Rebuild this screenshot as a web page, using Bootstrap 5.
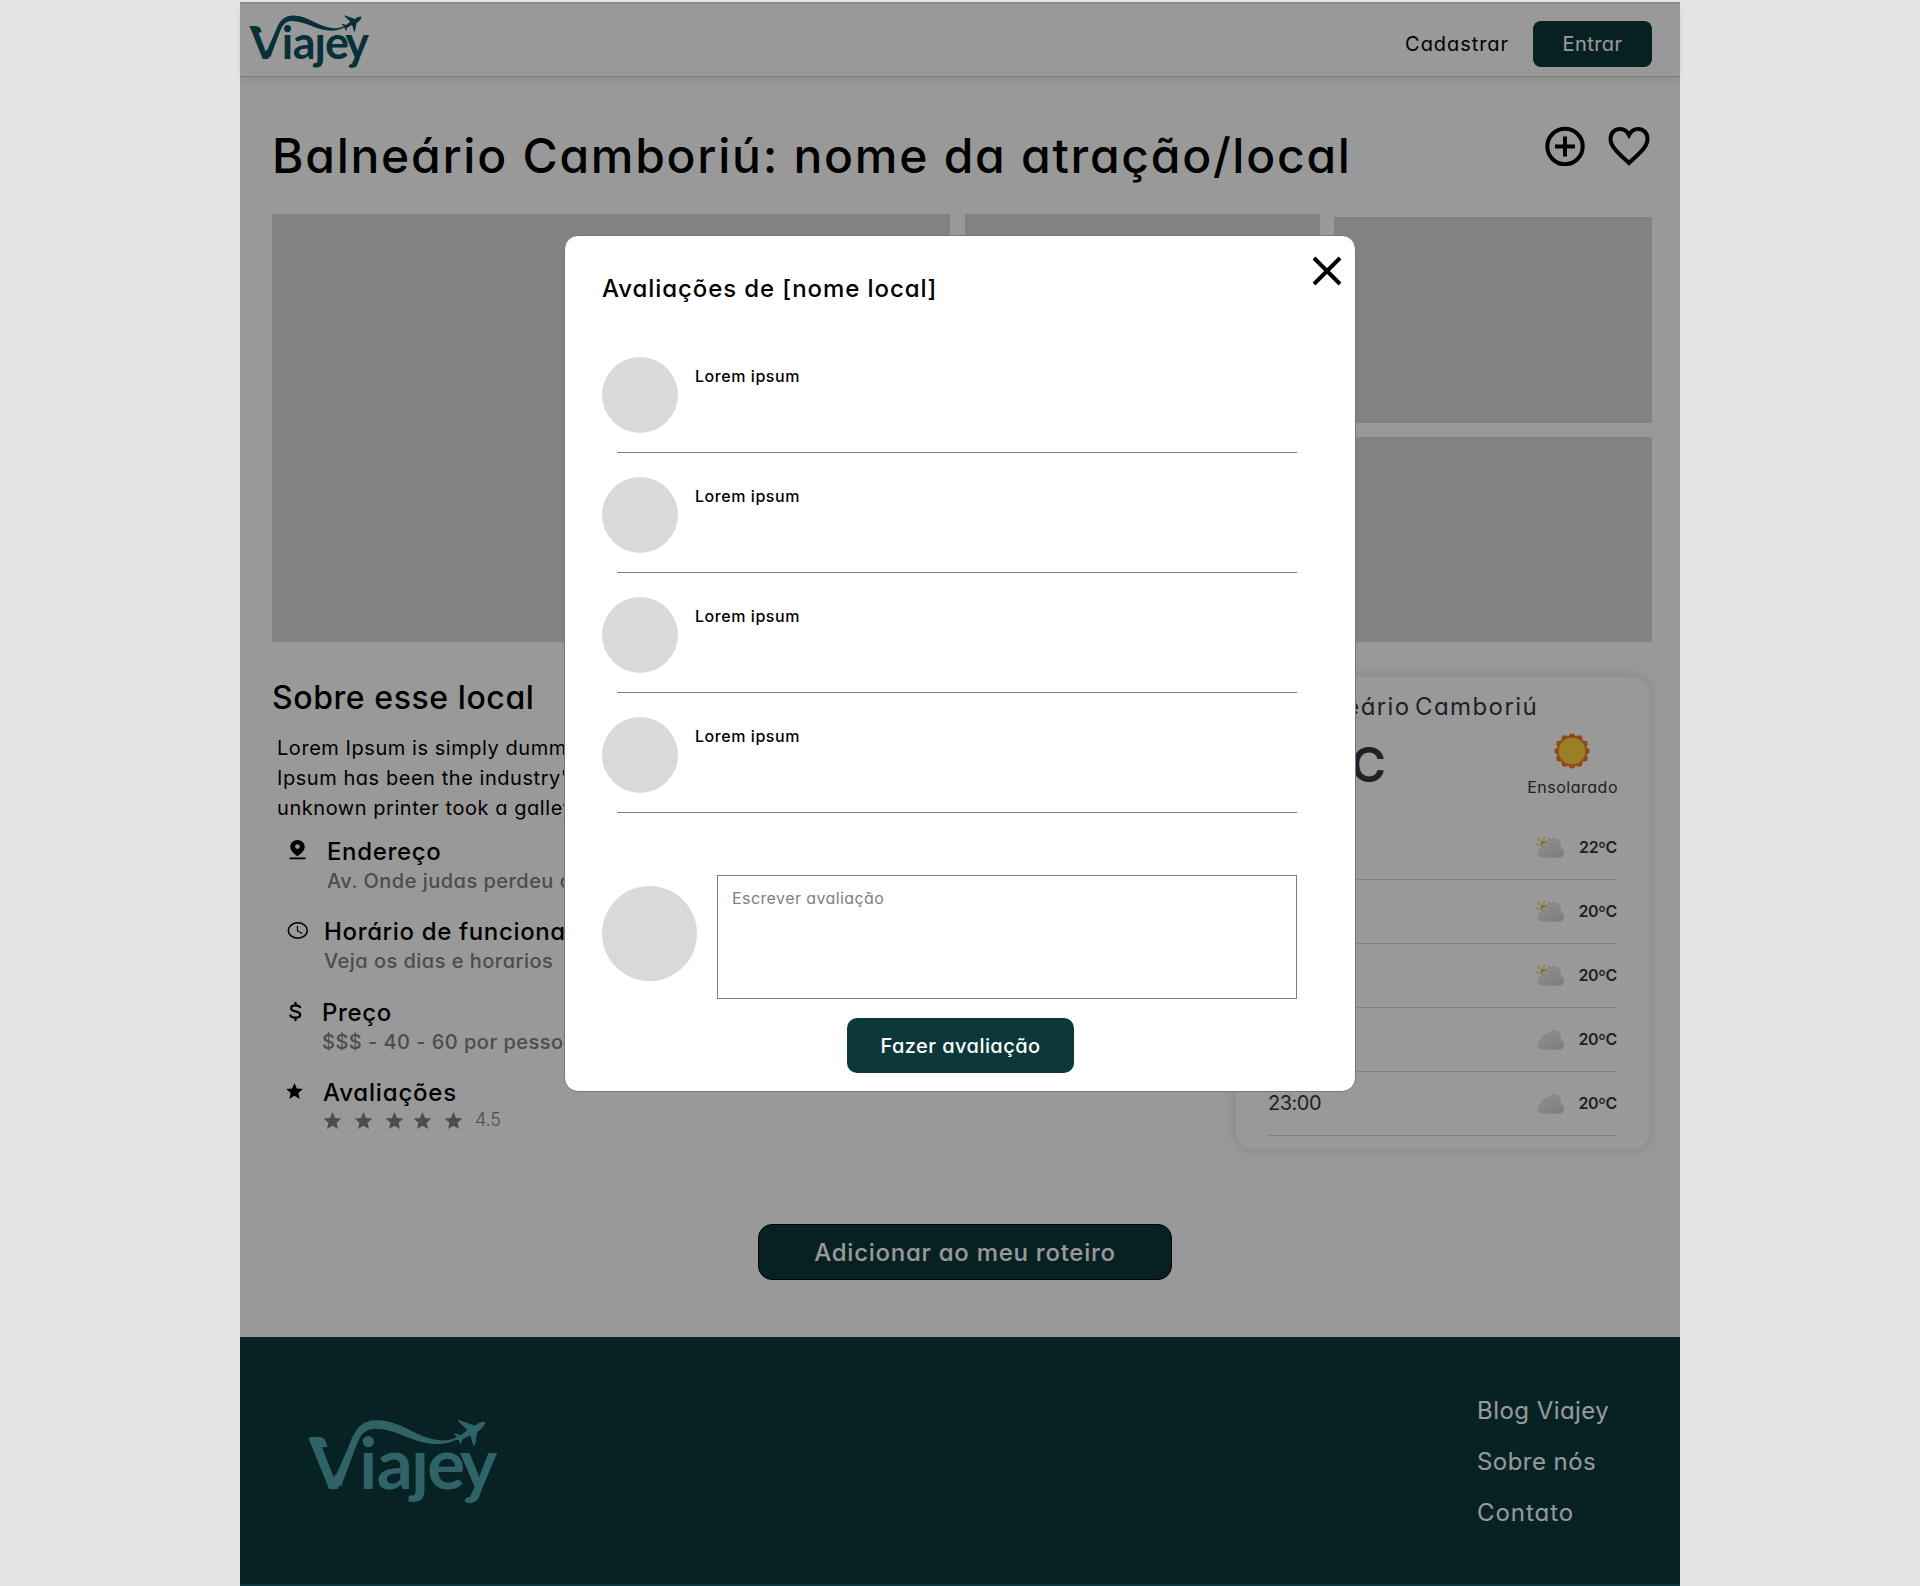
<!DOCTYPE html>
<html lang="pt-BR">
<head>
<meta charset="utf-8">
<meta name="viewport" content="width=device-width, initial-scale=1">
<title>Viajey</title>
<link href="https://cdn.jsdelivr.net/npm/bootstrap@5.3.0/dist/css/bootstrap.min.css" rel="stylesheet">
<style>
body{background:#e5e5e5;font-family:Inter,"Open Sans",sans-serif;color:#000;letter-spacing:.032em;font-feature-settings:"cv11"}
button,textarea{font-feature-settings:inherit}
.page{width:1440px;padding-top:2px;background:#fff;background-clip:content-box}
.t-16{font-size:16px;line-height:24px}
.t-20{font-size:20px;line-height:30px}
.t-24{font-size:24px;line-height:36px}
.soft{color:#808080}
.topbar{height:75px;border-top:2px solid #e5e5e5;border-bottom:1px solid #d4d4d4;box-shadow:0 4px 6px rgba(0,0,0,.08);padding:8px 28px 0 10px}
.topbar .logo{width:119px;height:54px;color:#0c535f;margin-top:-4px}
.logo{overflow:visible}
.btn-brand{background:#0d383b;color:#fff;border:0;padding:0}
.btn-enter{width:119px;height:46px;border-radius:8px;letter-spacing:.02em}
.signup{letter-spacing:.047em;margin-right:24px}
.headline{padding:49px 2px 0 32px}
.headline h1{font-size:48px;line-height:60px;letter-spacing:.0362em}
.gallery{padding:28px 28px 0 32px}
.ph{background:#d9d9d9}
.ph-big{width:678px;height:428px;margin-right:15px}
.ph-mid{width:355px;height:428px;margin-right:14px}
.ph-col{width:318px;padding-top:3px;gap:14px}
.ph-col .ph{height:206px}
.ph-col .ph + .ph{height:205px}
.details{height:507px;padding:35px 31px 0 32px}
.about h2{font-size:32px;line-height:40px;letter-spacing:.018em;margin:1px 0 15px}
.about .blurb{margin:0 0 13.5px 5px;width:700px;letter-spacing:.0275em}
.fact{height:80.5px}
.fact h3{font-size:24px;line-height:30px;margin:0 0 2px;letter-spacing:.027em}
.fact p{font-size:20px;line-height:24px;margin:0;letter-spacing:.0235em}
.fact svg{display:block;flex:none}
.stars{gap:12px;height:24px;margin-top:-2px}
.stars svg:nth-child(3){margin-right:-3px}
.stars span{font-size:18px;line-height:24px;font-weight:300;letter-spacing:-.01em}
.forecast{width:413px;height:472px;border-radius:16px;background:#fff;box-shadow:0 0 14px rgba(0,0,0,.14);padding:11.5px 32px 0;color:#35373f}
.forecast .place{text-align:right;padding-right:79px;letter-spacing:.058em;word-spacing:-.15em}
.now{height:91px}
.degrees{font-size:48px;line-height:48px;font-weight:600;width:114px;text-align:right;margin-top:16px;letter-spacing:0}
.sky{margin-top:8px}
.sky span{letter-spacing:.032em;margin-right:-1px}
.hour{height:64px;border-bottom:1px solid #d6d6d6;padding-top:16.5px}
.hour svg{margin:5px 0 0 auto}
.hour b{font-weight:600;letter-spacing:-.02em;width:51px;text-align:right;padding-top:3px}
.hour .clock{letter-spacing:-.025em}
.btn-route{width:414px;height:56px;border-radius:14px;border:1px solid #000;margin:75px 0 57px 518px;letter-spacing:.031em;padding-top:2px}
.foot{height:249px;background:#0d393e;padding:0 0 0 69px}
.foot .logo{width:188px;height:84px;color:#50a5ac;margin-top:83px}
.foot nav{width:203px;padding-top:56px;gap:15px;letter-spacing:.019em}
.foot nav span:last-child{letter-spacing:.04em}
.veil{position:absolute;left:0;top:2px;right:0;bottom:2px;background:rgba(0,0,0,.4)}
.review{position:absolute;left:324px;top:235px;width:792px;height:857px;border:1px solid #777;border-radius:14px;background:#fff;padding:35px 58px 0 37px}
.review h4{font-size:24px;line-height:36px;letter-spacing:.038em;margin:0 0 50px}
.closer{position:absolute;right:13px;top:20px;line-height:0}
.face{background:#d9d9d9;border-radius:50%;flex:none}
.entry{height:120px}
.entry .face{width:76px;height:76px;margin-right:17px}
.entry .who{padding-top:7px;letter-spacing:.035em}
.entry::after{content:"";display:block;height:1px;background:#808080;margin:19px 0 0 15px}
.writer{margin-top:38px}
.writer .face{width:95px;height:95px;margin:0 20px 7px 0}
.writer textarea{width:580px;height:124px;border:1px solid #808080;border-radius:0;resize:none;padding:9.5px 14px;letter-spacing:.026em;font-size:16px;line-height:24px}
.writer textarea::placeholder{color:#808080}
.btn-send{width:227px;height:55px;border-radius:10px;margin:19px 0 0 245px;letter-spacing:.022em}
</style>
</head>
<body>
<svg width="0" height="0" class="position-absolute" aria-hidden="true">
  <clipPath id="vclip"><path d="M-5 40H66L75 165H130V215H-5Z"/></clipPath>
  <symbol id="viajey" viewBox="0 0 564 252" overflow="visible">
    <g fill="currentColor">
      <g font-family="Lato, sans-serif" font-weight="700" font-size="213" letter-spacing="0"><text x="-1" y="206" clip-path="url(#vclip)">V</text><text x="151 203 306 355 452" y="206">iaȷey</text></g>
      <path d="M76 176 L118 82 C136 35 150 5 195 1 C270 -5 320 55 395 61 C415 62 430 58 447 50 L449 55 C425 70 400 74 375 72 C310 68 260 25 195 26 C160 28 150 55 139 85 L96 200Z"/>
      <path d="M0 51 H30 Q45 51 51 66 L55 80 L22 85 Q14 60 0 51Z"/>
      <path d="M508 200 C500 226 496 232 483 231 C471 230 464 240 470 246 C482 254 501 248 510 232 L520 200Z"/>
      <path d="M528 6 C520 4 508 8 498 17 L450 0 L446 2 L475 30 C465 38 460 42 455 46 L438 40 L435 43 L448 54 L440 60 L450 60 L452 72 L457 70 L461 58 C468 54 476 50 484 46 L493 77 L498 75 L505 36 C516 28 530 16 528 6Z"/>
    </g>
  </symbol>
  <symbol id="star" viewBox="2 2 20 19"><path fill="currentColor" d="M12 17.27 18.18 21l-1.64-7.03L22 9.24l-7.19-.61L12 2 9.19 8.63 2 9.24l5.46 4.73L5.82 21z"/></symbol>
  <linearGradient id="cg" x1="0" y1="0" x2="1" y2="1"><stop offset=".4" stop-color="#e3e4e8"/><stop offset="1" stop-color="#c6cede"/></linearGradient>
  <symbol id="cloud" viewBox="0 0 30 21"><path fill="url(#cg)" d="M6 20.500A5 5 0 0 1 5 10.700 6 6 0 0 1 11.500 5.200 7 7 0 0 1 24.300 11.300 4.700 4.700 0 0 1 24.500 20.500Z"/></symbol>
  <symbol id="suncloud" viewBox="0 0 30 21"><circle cx="8" cy="7.500" r="3.700" fill="#f0b429"/><path stroke="#f0b429" stroke-width="1.200" d="M8 0v2.300M2.500 2l1.700 1.700M.5 7.500h2.500M13.500 2l-1.700 1.700"/><use href="#cloud"/></symbol>
</svg>

<div class="page position-relative mx-auto">
  <header class="topbar d-flex align-items-center">
    <svg class="logo" role="img" aria-label="Viajey"><use href="#viajey"/></svg>
    <a class="signup t-20 text-black text-decoration-none ms-auto">Cadastrar</a>
    <button class="btn btn-brand btn-enter t-20">Entrar</button>
  </header>

  <main>
    <div class="headline d-flex align-items-start">
      <h1 class="fw-medium m-0 me-auto text-nowrap">Balneário Camboriú: nome da atração/local</h1>
      <svg width="40" height="40" viewBox="0 0 40 40" fill="none" stroke="#000" stroke-width="4" style="margin:0 23px 0 0"><circle cx="20" cy="20.500" r="17.700"/><path d="M20 10.500v20M10 20.500h20"/></svg>
      <svg width="42" height="40" viewBox="0 0 42 40" fill="none" stroke="#000" stroke-width="4" style="margin-right:28px"><path d="M21 37C13 29.500 2.500 21.500 2.500 13 2.500 7 6.500 3 12 3c3.700 0 7 2.200 9 6 2-3.800 5.300-6 9-6 5.500 0 9.500 4 9.500 10C39.500 21.500 29 29.500 21 37z"/></svg>
    </div>
    <div class="gallery d-flex">
      <div class="ph ph-big"></div>
      <div class="ph ph-mid"></div>
      <div class="ph-col d-flex flex-column"><div class="ph"></div><div class="ph"></div></div>
    </div>

    <div class="details d-flex justify-content-between align-items-start">
      <section class="about">
        <h2 class="fw-medium">Sobre esse local</h2>
        <p class="blurb t-20">Lorem Ipsum is simply dummy text of the printing<br>Ipsum has been the industry's standard dummy text<br>unknown printer took a galley of type</p>
        <div class="fact d-flex">
          <svg width="17" height="20" viewBox="0 0 17 20" style="margin:3px 21px 0 17px"><path d="M8.500 0C4.500 0 1.300 3 1.300 6.800c0 3.800 3.600 7 7.200 9.400 3.600-2.400 7.200-5.600 7.200-9.400C15.700 3 12.500 0 8.500 0zm0 9a2.400 2.400 0 1 1 0-4.800 2.400 2.400 0 0 1 0 4.800zM.5 17.500h16v1.800H.5z"/></svg>
          <div><h3 class="fw-medium">Endereço</h3><p class="fw-medium soft">Av. Onde judas perdeu as botas</p></div>
        </div>
        <div class="fact d-flex">
          <svg width="22" height="18" viewBox="0 0 22 18" fill="none" stroke="#000" stroke-width="1.500" style="margin:5px 15px 0 15px"><ellipse cx="10.800" cy="8.500" rx="9.500" ry="7.700"/><path stroke-width="1.200" d="M10.500 4v5l5 2.500"/></svg>
          <div><h3 class="fw-medium">Horário de funcionamento</h3><p class="fw-medium soft">Veja os dias e horarios</p></div>
        </div>
        <div class="fact d-flex">
          <svg width="13" height="19" viewBox="0 0 13 19" fill="none" stroke="#000" stroke-width="2.200" style="margin:4px 20px 0 17px"><path d="M11.300 6C11 4.200 9 3.300 6.500 3.300S2 4.200 2 6.200c0 2.200 2 2.600 4.500 3.200s4.700 1.200 4.700 3.400c0 2-2.100 2.900-4.700 2.900S1.400 14.600 1.200 12.600M6.500 0v3.300M6.500 15.700V19" /></svg>
          <div><h3 class="fw-medium">Preço</h3><p class="fw-medium soft text-nowrap">$$$ - 40 - 60 por pessoa</p></div>
        </div>
        <div class="fact d-flex">
          <svg width="17" height="16" style="margin:5px 20px 0 14px"><use href="#star"/></svg>
          <div><h3 class="fw-medium" style="letter-spacing:.034em">Avaliações</h3>
            <div class="soft d-flex align-items-center stars">
              <svg width="19" height="17"><use href="#star"/></svg><svg width="19" height="17"><use href="#star"/></svg><svg width="19" height="17"><use href="#star"/></svg><svg width="19" height="17"><use href="#star"/></svg><svg width="19" height="17"><use href="#star"/></svg><span>4.5</span>
            </div></div>
        </div>
      </section>

      <aside class="forecast">
        <div class="place t-24 text-nowrap">Balneário Camboriú</div>
        <div class="now d-flex justify-content-between align-items-start">
          <div class="degrees">22ºC</div>
          <div class="sky d-flex flex-column align-items-end t-16">
            <svg width="36" height="36" viewBox="-18 -18 36 36" style="margin:0 27px 6px 0">
              <g fill="#f27a2a"><circle r="15.300"/><g id="b"><circle cy="-14.300" r="3.300"/><circle cx="7.150" cy="-12.400" r="3.300"/><circle cx="12.400" cy="-7.150" r="3.300"/></g><use href="#b" transform="rotate(90)"/><use href="#b" transform="rotate(180)"/><use href="#b" transform="rotate(270)"/></g>
              <circle r="13.300" fill="#ffd440"/></svg>
            <span>Ensolarado</span>
          </div>
        </div>
        <div class="hours">
          <div class="hour d-flex"><span class="clock t-20">19:00</span><svg width="30" height="21"><use href="#suncloud"/></svg><b class="t-16">22ºC</b></div>
          <div class="hour d-flex"><span class="clock t-20">20:00</span><svg width="30" height="21"><use href="#suncloud"/></svg><b class="t-16">20ºC</b></div>
          <div class="hour d-flex"><span class="clock t-20">21:00</span><svg width="30" height="21"><use href="#suncloud"/></svg><b class="t-16">20ºC</b></div>
          <div class="hour d-flex"><span class="clock t-20">22:00</span><svg width="30" height="21"><use href="#cloud"/></svg><b class="t-16">20ºC</b></div>
          <div class="hour d-flex"><span class="clock t-20">23:00</span><svg width="30" height="21"><use href="#cloud"/></svg><b class="t-16">20ºC</b></div>
        </div>
      </aside>
    </div>
    <button class="btn btn-brand btn-route t-24 fw-medium">Adicionar ao meu roteiro</button>
  </main>

  <footer class="foot d-flex justify-content-between align-items-start">
    <svg class="logo" role="img" aria-label="Viajey"><use href="#viajey"/></svg>
    <nav class="d-flex flex-column t-24 text-white"><span>Blog Viajey</span><span>Sobre nós</span><span>Contato</span></nav>
  </footer>

  <div class="veil"></div>

  <div class="review" role="dialog" aria-label="Avaliações">
    <svg class="closer" width="30" height="30" viewBox="0 0 30 30"><path d="M2 2 28 28M28 2 2 28" stroke="#000" stroke-width="4"/></svg>
    <h4 class="fw-medium">Avaliações de [nome local]</h4>
    <div class="entry"><div class="d-flex"><div class="face"></div><div class="who t-16 fw-medium">Lorem ipsum</div></div></div>
    <div class="entry"><div class="d-flex"><div class="face"></div><div class="who t-16 fw-medium">Lorem ipsum</div></div></div>
    <div class="entry"><div class="d-flex"><div class="face"></div><div class="who t-16 fw-medium">Lorem ipsum</div></div></div>
    <div class="entry"><div class="d-flex"><div class="face"></div><div class="who t-16 fw-medium">Lorem ipsum</div></div></div>
    <div class="writer d-flex align-items-center"><div class="face"></div><textarea placeholder="Escrever avaliação"></textarea></div>
    <button class="btn btn-brand btn-send t-20 fw-medium">Fazer avaliação</button>
  </div>
</div>
<script src="https://cdn.jsdelivr.net/npm/bootstrap@5.3.0/dist/js/bootstrap.bundle.min.js"></script>
</body>
</html>
